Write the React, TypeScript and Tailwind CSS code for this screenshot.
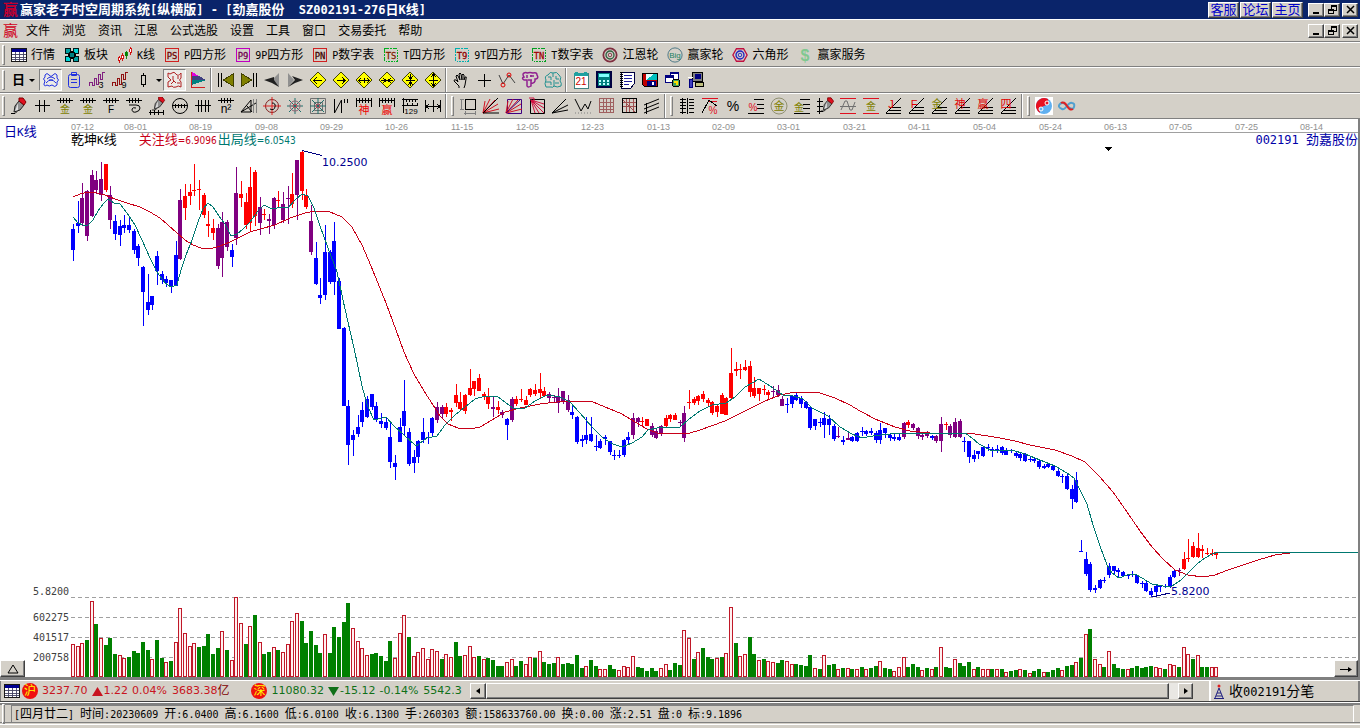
import type { ReactNode } from "react";

const STEP = 14 / 3;
const FIRST_X = 73;
const TOP = 119;
const BASE = 677;

const CANDLES = `
b224,229,250,261 b201,223,226,233 p183,198,223,226 p190,191,236,241 p170,175,216,217 p171,180,190,194
p162,179,195,201 r164,164,190,192 p186,195,220,229 b215,221,234,240 b220,226,235,246 b215,225,228,233
b218,225,230,233 b229,231,250,254 b244,246,258,266 b266,267,292,326 b274,302,310,315 b296,296,305,310
b251,256,271,285 b271,274,280,284 b276,279,283,287 b280,280,287,293 b241,255,286,286 p189,200,259,260
r184,196,208,220 r184,192,196,205 r164,190,191,196 r180,189,190,210 r193,195,215,218 r211,224,226,237
r219,228,233,240 p224,228,266,269 p212,222,258,277 p220,222,247,251 b244,250,257,267 p167,193,238,245
r181,194,198,207 r193,202,225,229 r167,187,223,231 r170,172,216,226 p197,207,223,235 r209,214,215,220
p214,219,221,234 p197,198,225,229 r191,200,201,208 p192,204,220,223 p186,198,199,224 r173,194,204,208
p160,160,195,220 r151,152,191,200 r189,195,207,209 p205,221,252,255 b242,258,284,285 b278,295,298,304
b225,252,295,300 b250,252,282,284 b222,241,282,295 b278,281,329,329 b327,328,406,406 b400,406,445,465
b430,435,440,456 b415,427,434,437 b402,410,422,427 b396,399,417,418 b394,394,407,410 b402,406,420,422
b413,421,424,428 b417,422,428,430 b423,437,462,468 b455,463,467,480 b418,427,442,442 b380,411,426,435
b428,432,464,466 b450,457,463,473 b440,441,457,463 b418,432,440,443 b432,437,438,444 b417,418,433,437
p402,407,420,423 p405,407,414,418 r403,407,414,417 r408,410,412,421 r384,395,403,407 r392,402,409,411
r394,395,411,414 r369,388,395,396 r381,381,389,396 r374,378,391,391 r392,394,396,400 r388,396,404,409
p397,407,409,417 r401,407,410,414 p410,412,415,418 b418,419,425,440 p397,399,420,422 r396,399,404,406
r389,399,400,402 r396,400,405,405 r388,389,395,397 r384,390,394,396 r373,389,393,399 r387,391,396,397
p392,394,398,403 p395,397,398,403 p388,396,403,413 p391,391,402,404 p395,400,410,412 b406,412,415,419
b416,417,442,444 b435,439,441,447 b417,435,440,444 b417,434,441,442 b435,446,447,451 b439,441,448,449
b435,437,439,445 b441,441,452,455 b450,455,456,460 b450,455,456,458 b439,440,455,457 b432,437,440,444
p413,418,435,439 p417,418,422,427 r417,421,422,426 r419,419,426,426 p423,426,435,437 p429,431,438,439
p425,426,434,436 r415,418,426,427 r414,415,419,422 r413,415,420,420 p420,422,423,427 p406,413,438,442
r390,402,403,409 r397,399,403,405 r395,396,401,405 r391,394,399,402 r398,400,403,407 r401,402,413,415
r404,406,412,417 r393,395,414,414 r397,398,415,415 r348,373,398,399 r362,369,371,376 r364,369,370,379
r360,367,370,371 r361,366,392,397 r377,388,396,398 r388,388,394,401 r385,389,390,395 r390,392,395,399
p386,391,392,398 p385,390,395,397 p396,399,406,406 b398,404,405,413 b395,396,404,408 b393,395,400,401
b396,398,404,408 b401,402,408,409 b406,407,428,430 b419,419,426,430 b418,422,423,427 b412,418,425,438
b415,419,425,435 b424,426,439,441 p427,436,437,438 b436,440,442,445 p433,438,440,440 b436,437,441,442
b432,433,441,442 b427,431,432,436 b430,431,434,436 b428,431,433,435 b431,433,440,443 b423,430,440,444
b428,428,433,438 b433,435,438,441 b433,437,439,441 b434,437,440,441 p422,423,437,439 r420,422,425,428
p423,424,428,430 p427,428,436,439 p432,435,437,440 p431,433,436,438 b435,436,438,440 p435,436,441,443
p417,424,441,452 r422,424,425,430 p424,426,435,438 p418,422,437,438 p419,421,437,438 b437,441,442,452
b441,441,457,463 b450,455,459,462 b451,451,454,459 b447,447,456,457 b444,447,448,451 b447,449,450,457
b445,449,450,453 b446,447,453,455 b448,450,455,455 b449,450,451,453 b451,453,456,458 b453,454,458,461
b453,454,461,462 b457,459,460,462 b458,459,461,463 b460,461,467,469 b464,466,468,469 b463,464,467,468
b465,466,470,471 b469,471,476,477 b474,476,477,483 b473,476,489,490 b485,489,499,509 b472,480,502,503
b540,551,552,552 b552,559,574,576 b562,564,590,592 b585,588,590,593 b579,580,588,589 b577,580,581,583
b563,566,575,578 b566,566,571,574 b568,570,572,577 b571,572,576,577 b574,575,576,579 b571,574,575,577
b575,575,583,584 b581,583,584,588 b580,583,591,592 b588,591,595,597 b585,586,592,596 b585,586,587,592
b584,586,587,588 b575,577,587,588 b569,571,577,578 p568,570,571,576 r552,559,569,570 r539,558,559,562
r542,546,557,558 r533,548,557,558 r545,549,551,558 r548,553,554,555 r549,553,554,556 r552,552,555,559
`;

const VOLUMES = `
r33 r31 r34 g37 r76 g53 r39 g32 g39 g23 r22 r19 g20 g26 g24 g35 g27 r18 g37 g19 r15 g16 r35 r69 r44 r31 r34 g30 g31 g43
g23 g29 r46 g27 r17 r80 r54 g33 r51 g62 r35 g23 g25 r30 g27 r25 r33 r56 r64 g56 g34 g46 g32 g24 r43 g24 g50 g40 g55 g74
r49 r36 r29 r22 g23 g24 g21 g16 g36 r19 r44 r62 g40 r21 r25 r29 r18 r28 r26 g18 r23 r20 g35 g21 r22 r31 r20 g21 r18 g19
g17 g11 g11 r15 r18 g11 g16 r13 r20 g19 r26 g15 g13 g14 r20 g13 g14 g13 g22 g9 r11 g17 g11 r8 r8 g12 g8 r7 r11 r10
r21 g10 g9 g6 g9 g6 r9 r13 g7 g14 g12 r47 r39 g18 r25 g29 g20 g18 r19 g20 r24 r70 g34 r21 r23 g40 g23 r17 g18 r16
r15 g14 g17 r16 r13 g13 g12 g11 g22 r9 g8 r22 g12 g13 r8 g9 r9 g8 r8 g10 r8 g9 g11 r16 g9 g8 r6 r10 r20 g10
g13 g10 r7 g9 r8 g10 r30 g10 g9 r18 g14 g11 g15 r8 g10 r8 r8 g8 r8 g8 r5 g6 g7 r8 g7 r4 g6 g8 r5 g5
g7 g9 r7 g11 g12 r15 g19 r43 g48 r18 r13 g10 r26 g13 g9 g8 r8 g9 g11 g9 g10 g11 r10 r9 g8 r13 r12 g10 r30 r23
g18 r22 g10 g10 r10 r10
`;

const RED_LINE =
  "73,197 80,194 88,192 97,193 105,195 115,199 127,203 140,207 150,212 160,218 168,225 177,233 185,240 193,245 201,248 210,249 220,246 230,242 240,237 250,232 260,229 275,225 290,218 305,213 316,211 330,212 342,217 352,227 362,245 371,266 386,303 396,330 404,352 414,374 424,391 433,405 440,416 448,424 458,428 470,429 480,427 492,420 505,412 520,408 540,404 557,402 580,401 593,402 610,409 622,414 635,422 647,429 660,434 690,433 700,430 725,421 745,411 765,401 780,395 790,393 805,392 820,393 835,398 850,405 860,411 875,419 895,427 910,431 930,433 975,434 1000,438 1015,441 1030,445 1055,450 1072,456 1085,462 1099,476 1113,492 1127,512 1140,531 1152,547 1163,559 1175,570 1188,575 1203,577 1215,575 1228,570 1243,565 1258,560 1275,555 1290,553 1298,552";
const TEAL_LINE =
  "73,217 78,223 83,225 88,225 93,220 98,211 104,203 108,199 114,203 120,204 127,213 135,225 142,240 150,258 157,272 165,283 171,287 177,285 181,270 186,255 192,240 198,222 203,209 208,203 213,207 219,216 225,224 231,236 237,234 243,229 250,222 258,211 264,205 272,209 282,207 288,208 295,200 302,194 308,196 314,208 320,226 328,248 337,272 345,309 354,348 362,386 368,407 374,420 386,417 394,426 404,435 416,446 427,438 437,436 445,425 455,415 465,407 475,399 485,396 497,396 505,402 514,409 525,408 535,401 547,395 560,397 570,402 580,413 592,427 603,438 613,444 622,447 632,443 642,437 648,430 657,428 680,427 688,420 700,411 712,405 726,403 735,397 745,387 759,379 770,386 783,395 793,396 803,399 812,408 828,416 840,427 852,434 862,438 873,436 890,434 907,433 940,434 965,433 972,438 979,444 990,450 1000,451 1012,450 1025,454 1040,460 1055,466 1067,473 1074,478 1080,490 1087,504 1093,525 1100,546 1107,565 1112,573 1119,578 1127,575 1135,574 1142,578 1152,584 1163,586 1172,586 1181,580 1188,573 1197,564 1205,558 1212,554 1219,552";

const DATES = [
  "08-01", "08-19", "09-08", "09-29", "10-26", "11-15", "12-05", "12-23", "01-13", "02-09",
  "03-01", "03-21", "04-11", "05-04", "05-24", "06-13", "07-05", "07-25", "08-14",
];

const fills: Record<string, string> = { b: "#0000ff", p: "#800080", r: "#ff0000" };
const candles = CANDLES.trim().split(/\s+/).map((s) => {
  const [high, top, bottom, low] = s.slice(1).split(",").map(Number);
  return { fill: fills[s[0]], high, top, bottom, low };
});
const volumes = VOLUMES.trim().split(/\s+/).map((s) => ({ up: s[0] === "r", h: Number(s.slice(1)) }));
const barX = (i: number) => Math.round(FIRST_X + i * STEP);

const CJK = "font-['Liberation_Sans','Noto_Sans_CJK_SC',sans-serif]";
const MONO = "font-['DejaVu_Sans_Mono','Noto_Sans_CJK_SC',monospace]";
const VERDANA = "font-['DejaVu_Sans','Noto_Sans_CJK_SC',sans-serif]";
const RAISED =
  "border border-t-white border-l-white border-r-[#404040] border-b-[#404040] bg-[#d4d0c8] shadow-[inset_-1px_-1px_0_#808080]";

/** Latin runs are half as wide as a Chinese character, so they get a smaller size. */
function Mixed({ text, latin = "text-[10px]" }: { text: string; latin?: string }) {
  return (
    <>
      {(text.match(/[\x00-\x7f]+|[^\x00-\x7f]+/g) ?? []).map((run, i) => (
        <span key={i} className={/^[\x00-\x7f]/.test(run) ? `${MONO} ${latin} leading-none whitespace-pre` : ""}>
          {run}
        </span>
      ))}
    </>
  );
}

function Glyph({ children, smooth, size = 18 }: { children: ReactNode; smooth?: boolean; size?: number }) {
  return (
    <svg
      width={size}
      height={size}
      viewBox="0 0 18 18"
      fill="none"
      stroke="#000"
      shapeRendering={smooth ? "auto" : "crispEdges"}
      aria-hidden="true"
      className="shrink-0"
    >
      {children}
    </svg>
  );
}

function T({ x, y, size = 10, fill, children, bold }: { x: number; y: number; size?: number; fill: string; children: string; bold?: boolean }) {
  return (
    <text x={x} y={y} fontSize={size} fill={fill} stroke="none" textAnchor="middle" fontWeight={bold ? 700 : 400} className={CJK}>
      {children}
    </text>
  );
}

/* ---- shared icon pieces ---- */
const scale = <path d="M1 3.5h16M4.5 1v5M7.5 1v5M10.5 1v5M13.5 1v5" />;
const pen = (
  <>
    <path d="M9 4L5 9l-1 6 6-2 4-5z" fill="#909090" stroke="#202020" />
    <path d="M8 6l-3 8 3-1z" fill="#e0e0e0" stroke="none" />
    <path d="M9 1h4l3 4-2 3-5-4z" fill="#e01020" stroke="#800000" />
    <path d="M1 16.5h4l2-2" />
  </>
);
const fanLines = <path d="M1 16L16 1M1 16.5h15M4 13.5h12M7 10.5h9" />;
const steps = <path d="M7 2.5h10M10 7.5h7M10 11.5h7M1 16.5h16" />;

const box = (label: string, edge: string, ink: string, dotted = false) => (
  <Glyph size={16}>
    <rect x="2" y="2" width="14" height="14" stroke={edge} strokeWidth="1.5" strokeDasharray={dotted ? "2 1" : undefined} />
    <text x="9" y="13" fontSize="10" fill={ink} stroke={ink} strokeWidth="0.3" textAnchor="middle" className={MONO}>
      {label}
    </text>
  </Glyph>
);

const diamond = (arrows: string) => (
  <Glyph>
    <path d="M9 1l8 8-8 8-8-8z" fill="#ffff00" stroke="#404000" />
    <path d={arrows} strokeWidth="1" />
  </Glyph>
);

const squiggle = (color: string, n: string) => (
  <Glyph>
    <path d="M1.5 15v-4h3v3h2V7h2v6h2V3h2v5h2V1h2" stroke={color} />
    <T x={13} y={17} size={9} fill="#000">{n}</T>
  </Glyph>
);

const quoteItems: [string, ReactNode][] = [
  ["行情", (
    <Glyph size={16} key="a">
      <rect x="1" y="2" width="16" height="14" fill="#fff" stroke="#000" />
      <path d="M1 4h16" stroke="#000090" strokeWidth="3" />
      <path d="M1 8.5h16M1 11.5h16M1 14.5h16M5.5 6v10M9.5 6v10M13.5 6v10" stroke="#404060" />
    </Glyph>
  )],
  ["板块", (
    <Glyph size={16} key="b">
      <path d="M5 5h8v8H5z" fill="#000" />
      <rect x="1.5" y="1.5" width="6" height="6" fill="#00a0a0" />
      <rect x="10.5" y="1.5" width="6" height="6" fill="#00d8d8" />
      <rect x="1.5" y="10.5" width="6" height="6" fill="#00d8d8" />
      <rect x="10.5" y="10.5" width="6" height="6" fill="#00a0a0" />
      <rect x="6.5" y="6.5" width="5" height="5" fill="#008080" />
    </Glyph>
  )],
  ["K线", (
    <Glyph size={16} key="c">
      <path d="M2.5 10v8M6.5 7v9M15.5 0v9" stroke="#d00000" />
      <path d="M10.5 4v9" stroke="#008000" />
      <path d="M1.5 12h2v3h-2zM5.5 9h2v4h-2zM14.5 2h2v4h-2z" fill="#fff" stroke="#d00000" />
      <path d="M9.5 6h2v4h-2z" fill="#008000" stroke="#008000" />
    </Glyph>
  )],
  ["P四方形", box("PS", "#d02020", "#700000")],
  ["9P四方形", box("P9", "#c000c0", "#700050")],
  ["P数字表", box("PN", "#d02020", "#400000")],
  ["T四方形", box("TS", "#00b020", "#802000", true)],
  ["9T四方形", box("T9", "#00b0b0", "#900000", true)],
  ["T数字表", box("TN", "#00a020", "#a00000", true)],
  ["江恩轮", (
    <Glyph size={16} smooth key="d">
      <circle cx="9" cy="9" r="7.5" stroke="#803040" strokeWidth="2" />
      <circle cx="9" cy="9" r="4.5" stroke="#306040" strokeWidth="1.5" />
      <circle cx="9" cy="9" r="2" stroke="#803040" />
    </Glyph>
  )],
  ["赢家轮", (
    <Glyph size={16} smooth key="e">
      <circle cx="9" cy="9" r="8" stroke="#407080" />
      <T x={9} y={12} size={9} fill="#208060">Big</T>
    </Glyph>
  )],
  ["六角形", (
    <Glyph size={16} smooth key="f">
      <path d="M5 2h8l4 7-4 7H5L1 9z" stroke="#c01040" strokeWidth="1.5" />
      <circle cx="9" cy="9" r="4.5" stroke="#2020c0" strokeWidth="1.5" />
      <circle cx="9" cy="9" r="2" stroke="#2020c0" />
    </Glyph>
  )],
  ["赢家服务", (
    <Glyph size={16} smooth key="g"><T x={9} y={16} size={18} fill="#80c890" bold>$</T></Glyph>
  )],
];

const cursorTools: [string, ReactNode][] = [
  ["手形", (
    <Glyph smooth key="a">
      <path d="M7 17v-2L2 10q0-2 2-1l2 2-2-6q1-2 2 0l2 4-1-6q1-2 2 0l1 6V4q1-2 2 0v5l1-3q2-1 1 2l-1 6-1 3" strokeWidth="1" />
    </Glyph>
  )],
  ["十字", <Glyph key="b"><path d="M9.5 3v13M3 9.5h13" /></Glyph>],
  ["折线", (
    <Glyph smooth key="c">
      <path d="M1 4l4 9 6-9 6 8" stroke="#404040" />
      <circle cx="5" cy="14" r="2" stroke="#e00000" />
      <circle cx="11" cy="4" r="2" stroke="#e00000" />
    </Glyph>
  )],
  ["云形", (
    <Glyph smooth key="d">
      <path d="M3 2q2-1 3 0 3-1 6 0 4-1 4 2 2 3-1 4h-1v2q-1 3-4 2v3q-3 2-4 0V9H3Q0 7 3 6 1 3 3 2zM6 4v3M10 4v2M13 5h-4M7 9h4M10 12V9" stroke="#902090" strokeWidth="1.5" />
    </Glyph>
  )],
  ["脑图", (
    <Glyph smooth key="e">
      <path d="M9 2Q6 0 4 4 0 5 2 9q-2 4 0 7h5q2 1 3-1 3 2 7 0 1-3-1-5 2-4-1-6Q13 0 9 2zM9 2v4M4 6h3v3M2 11h5v3M12 5v3h3M11 12h4M10 9v6" stroke="#209090" />
    </Glyph>
  )],
];

const utilityTools: [string, ReactNode][] = [
  ["日历", (
    <Glyph key="a">
      <rect x="2" y="2" width="14" height="15" fill="#fff" stroke="#408080" />
      <path d="M2 3.5h14M4.5 1v3M13.5 1v3" stroke="#20a0a0" strokeWidth="3" />
      <T x={9} y={14} size={10} fill="#d00000">21</T>
    </Glyph>
  )],
  ["计算器", (
    <Glyph key="b">
      <rect x="2" y="1" width="14" height="15" fill="#008080" stroke="#000040" strokeWidth="2" />
      <path d="M4 4.5h10" stroke="#80ffff" strokeWidth="3" />
      <path d="M4 9.5h10M4 12.5h10" stroke="#c0ffff" strokeWidth="2" strokeDasharray="2 2" />
    </Glyph>
  )],
  ["记事", (
    <Glyph key="c">
      <path d="M3 1h13v12l-3 4H3z" fill="#fff" stroke="#000040" />
      <path d="M6 4.5h8M6 7.5h8M6 10.5h8M6 13.5h5" stroke="#2020a0" />
      <path d="M3.5 1v16" strokeDasharray="1 1" strokeWidth="3" />
    </Glyph>
  )],
  ["保存", (
    <Glyph key="d">
      <path d="M1.5 2.5h15v13h-13l-2-2z" fill="#c00000" />
      <path d="M5 3h11v6H5z" fill="#00c0c0" stroke="none" />
      <path d="M5 9l8-6H5z" fill="#e0ffff" stroke="none" />
      <path d="M6 10h9v5H6z" fill="#000080" stroke="none" />
      <path d="M11 11h2v3h-2z" fill="#fff" stroke="none" />
    </Glyph>
  )],
  ["网络", (
    <Glyph key="e">
      <rect x="6.5" y="1.5" width="8" height="8" fill="#fff" stroke="#000080" />
      <rect x="1.5" y="4.5" width="8" height="7" fill="#fff" stroke="#000080" />
      <path d="M2 6h7M7 2h7" stroke="#000080" strokeWidth="2" />
      <circle cx="12" cy="12" r="4" fill="#40a060" />
      <path d="M10 11h3v3" stroke="#ffe000" strokeWidth="2" />
    </Glyph>
  )],
  ["电脑", (
    <Glyph key="f">
      <rect x="5.5" y="1.5" width="10" height="9" fill="#808080" />
      <rect x="8" y="3" width="6" height="5" fill="#000080" stroke="none" />
      <path d="M8.5 11.5h8v4h-8z" fill="#c0c080" />
      <path d="M2.5 8.5h3v8h-3z" fill="#4040c0" stroke="#000080" />
      <path d="M1 6.5h5" stroke="#fff" />
    </Glyph>
  )],
];

const web = <path d="M9 1v16M1 9h16M3 3l12 12M15 3L3 15" stroke="#20706c" />;
const redFan = <path d="M1 16L3 4M1 16L8 2M1 16L13 3M1 16L16 7M1 16l16-4" stroke="#d01020" />;

const drawTools: [string, ReactNode][] = [
  ["画笔", <Glyph smooth key="0">{pen}</Glyph>],
  ["分割", <Glyph key="1"><path d="M2 8.5h15M6.5 3v12M11.5 3v12" /></Glyph>],
  ["金分割一", <Glyph key="2">{scale}<T x={9} y={16} fill="#808000">金</T></Glyph>],
  ["金分割二", <Glyph key="3">{scale}<T x={9} y={16} fill="#808000">金</T></Glyph>],
  ["F分割", <Glyph key="4">{scale}<T x={9} y={16} fill="#000">F</T></Glyph>],
  ["螺旋", <Glyph smooth key="5">{scale}<path d="M4 8h7q4 0 4 3t-4 4-4-3q1-2 4-1" /></Glyph>],
  ["标尺笔", <Glyph smooth key="6"><g transform="translate(3 -1) scale(.85)">{pen}</g><path d="M1 15.5h15M2.5 13v5M6.5 13v5M10.5 13v5M15.5 13v5" /></Glyph>],
  ["圆尺", <Glyph smooth key="7"><circle cx="9" cy="9" r="7.5" /><path d="M1 8.5h16M4.5 7v4M7.5 7v4M10.5 7v4M13.5 7v4" /></Glyph>],
  ["四分", <Glyph key="8"><path d="M1 8.5h16M4.5 3v12M7.5 3v12M11.5 3v12M14.5 3v12" /></Glyph>],
  ["平方", <Glyph key="9">{scale}<T x={9} y={16} size={12} fill="#000">n²</T></Glyph>],
  ["三角", <Glyph smooth key="10"><path d="M1 15L11 3v12zM1 15l15-9M7 9l5 6" /><path d="M13.5 2v14M16.5 2v14" stroke="#808080" /></Glyph>],
  ["圆周", <Glyph smooth key="11"><circle cx="9" cy="9" r="6.5" stroke="#802020" /><path d="M9 0v18M0 9h18" stroke="#e02020" /><path d="M9 6q4 0 3 4t-5 2" /></Glyph>],
  ["圆网", <Glyph smooth key="12">{web}<circle cx="9" cy="9" r="5" stroke="#906070" /><circle cx="9" cy="9" r="2" stroke="#c04050" /></Glyph>],
  ["方网", <Glyph smooth key="13"><path d="M1.5 1.5h15v15h-15zM5.5 5.5h8v8h-8z" stroke="#707070" />{web}<circle cx="9" cy="9" r="2" stroke="#c04050" /></Glyph>],
  ["波动", <Glyph smooth key="14"><path d="M2.5 2v14L9.5 3v13M12.5 2v4M15.5 2v4" /></Glyph>],
  ["神分割", <Glyph key="15">{scale}<path d="M1.5 1v9M16.5 1v9" /><T x={9} y={17} size={11} fill="#ee0000">神</T></Glyph>],
  ["赢分割", <Glyph key="16">{scale}<path d="M1.5 1v9M16.5 1v9" /><T x={9} y={17} size={11} fill="#ee0000">赢</T></Glyph>],
  ["数尺", <Glyph key="17"><path d="M2.5 1v15M1 2.5h16M1 8.5h16M5.5 2v3M8.5 2v3M11.5 2v3M14.5 2v3M6.5 6v3M11.5 6v3M16.5 6v3" /><T x={10} y={17} size={8} fill="#000">129</T></Glyph>],
  ["间距", <Glyph key="18"><path d="M1.5 3v12M16.5 3v12M9.5 3v12M2 9.5h14M5 7l-3 2.5L5 12M13 7l3 2.5-3 2.5" /></Glyph>],
];

const shapeTools: [string, ReactNode][] = [
  ["矩形", <Glyph key="0"><path d="M6.5 2.5h10v10h-10z" /><path d="M2.5 2v11M1 2.5h4M1 12.5h4M5 16.5h12M6.5 14v4M16.5 14v4" stroke="#808080" /></Glyph>],
  ["扇形一", <Glyph smooth key="1">{redFan}<path d="M1 16L16 1M1 16h16" /></Glyph>],
  ["扇形二", <Glyph smooth key="2"><path d="M2.5 2.5h14v14h-14z" stroke="#400080" />{redFan}<path d="M1 16L16 2" stroke="#400080" /></Glyph>],
  ["扇形三", <Glyph smooth key="3"><path d="M2.5 2.5h14v14h-14z" /><path d="M3 3l13 4M3 3l13 8M3 3l13 13M3 3l8 13M3 3l4 13M1 1h5v5" stroke="#d01040" /></Glyph>],
  ["射线", <Glyph smooth key="4"><path d="M1 16L15 2M1 16l16-8M1 16l16-3" /></Glyph>],
  ["折角", <Glyph smooth key="5"><path d="M1 2l6 12 4-7 3 5 3-8" /><path d="M1 16h16" stroke="#808080" strokeDasharray="1 2" /></Glyph>],
  ["网格一", <Glyph key="6"><path d="M2.5 1.5h14v14h-14zM2 5.5h15M2 9.5h15M2 12.5h15M6.5 1v15M9.5 1v15M13.5 1v15" stroke="#a06060" /></Glyph>],
  ["网格二", <Glyph key="7"><path d="M2 5.5h15M2 9.5h15M6.5 1v15M9.5 1v15M13.5 1v15M2 2l14 14" stroke="#a05050" /><path d="M2.5 1.5h14v14h-14z" /></Glyph>],
  ["平行", <Glyph smooth key="8"><path d="M1 8l15-6M1 12l15-6M1 16l15-6M3.5 6v11" /></Glyph>],
];

const percentTools: [string, ReactNode][] = [
  ["列表", <Glyph key="0"><path d="M4.5 1v16M9.5 1v16M2 2.5h6M2 5.5h6M2 8.5h6M2 11.5h6M2 15.5h6M11 2.5h5M11 5.5h5M11 8.5h5M11 11.5h5M11 15.5h5" /></Glyph>],
  ["百分线", <Glyph key="1"><path d="M1 1.5h16M8 4.5h8" stroke="#e01020" /><path d="M1 16L8 3l8 6" /><T x={12} y={17} fill="#e01020">%</T></Glyph>],
  ["百分比", <Glyph key="2"><T x={9} y={14} size={14} fill="#000">%</T></Glyph>],
  ["百分阶", <Glyph key="3">{steps}<T x={6} y={14} fill="#e01020">%</T></Glyph>],
  ["金圆", <Glyph smooth key="4"><circle cx="9" cy="9" r="8" stroke="#909070" /><T x={9} y={13} size={11} fill="#808000">金</T></Glyph>],
  ["金阶", <Glyph key="5">{steps}<T x={6} y={14} size={10} fill="#808000">金</T></Glyph>],
  ["笔尺", <Glyph smooth key="6"><g transform="translate(4 0) scale(.85)">{pen}</g><path d="M3.5 1v16M1 4.5h6M1 9.5h6M1 14.5h6" /></Glyph>],
  ["波带", <Glyph smooth key="7"><path d="M1 1.5h16M1 16.5h16" stroke="#e01020" /><path d="M1 9.5h16M2 13l4-9h2l3 9h2l3-8" stroke="#707070" /></Glyph>],
  ["金带", <Glyph key="8"><path d="M1 1.5h16M1 16.5h16" stroke="#e01020" /><T x={9} y={13} fill="#808000">金</T></Glyph>],
  ...[["J", "#e00000"], ["F", "#e00000"], ["金", "#808000"], ["神", "#e00000"], ["赢", "#e00000"], ["四", "#e00000"]].map(
    ([c, color]): [string, ReactNode] => [`${c}角线`, <Glyph key={c}>{fanLines}<T x={6} y={11} size={11} fill={color}>{c}</T></Glyph>]
  ),
];

const extraTools: [string, ReactNode][] = [
  ["太极", (
    <Glyph smooth key="a">
      <rect width="18" height="18" fill="#fff" stroke="none" />
      <circle cx="9" cy="9" r="8" fill="#60b0f0" stroke="none" />
      <path d="M13 2A8 8 0 1 0 5 16Q4 10 9 9t4-7z" fill="#e81020" stroke="none" />
      <circle cx="12" cy="6" r="2" fill="#e81020" stroke="#fff" />
      <circle cx="6" cy="12" r="2" fill="#60b0f0" stroke="#fff" />
    </Glyph>
  )],
  ["无穷", (
    <Glyph smooth key="b">
      <path d="M9 9Q5 4 2 7t2 5q2 1 5-3t5-3q3 0 2 4t-7-1" stroke="#50a0d0" strokeWidth="2" />
      <path d="M3 6q3-2 6 3t6 3" stroke="#e02020" strokeWidth="2" />
    </Glyph>
  )],
];

function Grip() {
  return <div className="mx-[2px] h-[20px] w-[3px] shrink-0 border border-t-white border-r-[#808080] border-b-[#808080] border-l-white" />;
}

function Divider() {
  return <div className="mr-[2px] ml-px h-[24px] w-[2px] shrink-0 border-r border-l border-r-white border-l-[#808080]" />;
}

function ToolButton({ name, pressed, children }: { name: string; pressed?: boolean; children: ReactNode }) {
  return (
    <button
      type="button"
      aria-label={name}
      title={name}
      className={`flex h-[22px] w-[23px] shrink-0 items-center justify-center ${
        pressed ? "border border-t-[#808080] border-r-white border-b-white border-l-[#808080] bg-[#ecebe7]" : ""
      }`}
    >
      {children}
    </button>
  );
}

function Tools({ items }: { items: [string, ReactNode][] }) {
  return items.map(([name, icon]) => (
    <ToolButton key={name} name={name}>{icon}</ToolButton>
  ));
}

function Drop({ name }: { name: string }) {
  return (
    <button type="button" aria-label={name} className="flex h-[22px] w-[9px] shrink-0 items-center justify-center">
      <svg width="6" height="3" aria-hidden="true"><path d="M0 0h6L3 3z" /></svg>
    </button>
  );
}

function WindowButtons() {
  const icons = [
    <path key="min" d="M3 8h6v2H3z" fill="#000" stroke="none" />,
    <path key="restore" d="M5.5 5V1.500h5v5H8M5 2.500h6M2.500 5.500h5v4h-5zM2 6.500h6" />,
    <path key="close" d="M3 2l7 7M10 2L3 9" strokeWidth="1.500" shapeRendering="auto" />,
  ];
  return (
    <div className="flex shrink-0 items-center">
      {["最小化", "还原", "关闭"].map((name, i) => (
        <button key={name} type="button" aria-label={name} className={`flex h-[14px] w-[16px] items-center justify-center ${RAISED} ${i === 2 ? "ml-[2px]" : ""}`}>
          <svg width="13" height="11" fill="none" stroke="#000" shapeRendering="crispEdges" aria-hidden="true">{icons[i]}</svg>
        </button>
      ))}
    </div>
  );
}

function Chart() {
  return (
    <main className="relative border-r-2 border-[#808080] bg-white">
      <svg width="100%" height="558" className="block" role="img" aria-label="劲嘉股份 日K线">
        <g transform={`translate(0 ${-TOP})`} shapeRendering="crispEdges">
          <line x1="71" x2="100%" y1="132.5" y2="132.5" stroke="#a0a0a0" />
          <g className={CJK} fontSize="9" fill="#909090">
            <text x="71" y="130">07-12</text>
            {DATES.map((d, i) => (
              <text key={d} x={Math.round(124 + (i * 196) / 3)} y="130">{d}</text>
            ))}
          </g>

          {[597.5, 617.5, 637.5, 657.5].map((y) => (
            <line key={y} x1="71" x2="100%" y1={y} y2={y} stroke="#a0a0a0" strokeDasharray="4 3" />
          ))}
          <g className={MONO} fontSize="10" fill="#404040" textAnchor="end">
            <text x="69" y="595">5.8200</text>
            <text x="69" y="621">602275</text>
            <text x="69" y="641">401517</text>
            <text x="69" y="661">200758</text>
          </g>

          {volumes.map(({ up, h }, i) =>
            up ? (
              <rect key={i} x={barX(i) - 1.5} y={BASE - h + 0.5} width="3" height={h - 1} fill="#fff0f0" stroke="#c01828" />
            ) : (
              <rect key={i} x={barX(i) - 2} y={BASE - h} width="4" height={h} fill="#008000" />
            )
          )}

          {candles.map((c, i) => (
            <g key={i} fill={c.fill}>
              <rect x={barX(i)} y={c.high} width="1" height={c.low - c.high} />
              <rect x={barX(i) - 2} y={c.top} width="4" height={Math.max(1, c.bottom - c.top)} />
            </g>
          ))}

          <polyline points={RED_LINE} fill="none" stroke="#c80018" />
          <polyline points={TEAL_LINE} fill="none" stroke="#007870" />
          <line x1="1219" x2="100%" y1="552.5" y2="552.5" stroke="#007870" />

          <path d="M302 150.500l20 5M1152 597l18-4" stroke="#000080" fill="none" />
          <path d="M1104 147h9l-4.500 4z" />
          <g className={VERDANA} fontSize="11" fill="#000090">
            <text x="322" y="166">10.2500</text>
            <text x="1171" y="595">5.8200</text>
          </g>
        </g>
      </svg>

      {/* captions over the plot */}
      <div className="absolute top-1 left-1 text-[13px] leading-[18px] text-[#0000a8]">
        <Mixed text="日K线" latin="text-[11px]" />
      </div>
      <div className="absolute top-3 left-[71px] flex text-[13px] leading-[18px]">
        <span className="mr-[22px]"><Mixed text="乾坤K线" latin="text-[11px]" /></span>
        <span className="mr-px text-[#c80018]">关注线<span className="font-['DejaVu_Sans_Condensed','DejaVu_Sans',sans-serif] text-[10px]">=6.9096</span></span>
        <span className="text-[#007870]">出局线<span className="font-['DejaVu_Sans_Condensed','DejaVu_Sans',sans-serif] text-[10px]">=6.0543</span></span>
      </div>
      <div className="absolute top-3 right-0 text-[13px] leading-[18px] text-[#0000a8]">
        <Mixed text="002191 劲嘉股份" latin="text-[12px]" />
      </div>
      <button type="button" aria-label="展开" className={`absolute bottom-0 left-0 flex h-[17px] w-[25px] items-center justify-center ${RAISED}`}>
        <svg width="12" height="10" fill="none" stroke="#000" aria-hidden="true"><path d="M6 1l5 8H1z" /></svg>
      </button>
      <button type="button" aria-label="向右" className={`absolute right-0 bottom-0 flex h-[17px] w-[24px] items-center justify-center ${RAISED}`}>
        <svg width="12" height="8" stroke="#000" aria-hidden="true"><path d="M0 4.500h9" /><path d="M8 2v5l4-2.500z" stroke="none" /></svg>
      </button>
    </main>
  );
}

function Badge({ children }: { children: string }) {
  return (
    <span className="flex size-4 shrink-0 items-center justify-center rounded-full bg-[#f01010] text-[12px] leading-none text-[#ffff00]">
      {children}
    </span>
  );
}

function Quote({ index, change, percent, amount, up }: { index: string; change: string; percent: string; amount: string; up?: boolean }) {
  return (
    <span className={`ml-1 flex items-center gap-1 ${up ? "text-[#c81420]" : "text-[#107018]"}`}>
      <span>{index}</span>
      <span className="flex items-center gap-px">
        <svg width="11" height="9" fill="currentColor" aria-hidden="true">
          <path d={up ? "M5.500 0L11 9H0z" : "M0 0h11L5.500 9z"} />
        </svg>
        {change}
      </span>
      <span className="mr-px">{percent}</span>
      <span>{amount}</span>
    </span>
  );
}

function IndexBar() {
  return (
    <section className="flex h-[22px] items-stretch border-t border-t-white border-b border-b-[#404040]">
      <div className={`flex w-[470px] shrink-0 items-center overflow-hidden whitespace-pre border-l border-l-[#808080] pl-[3px] text-[11px] ${VERDANA}`}>
        {quoteItems[0][1]}
        <span className="ml-[2px]"><Badge>沪</Badge></span>
        <Quote index="3237.70" change="1.22" percent="0.04%" amount="3683.38" up />
        <span className="text-[12px] text-[#800000]">亿</span>
        <span className="ml-[22px]"><Badge>深</Badge></span>
        <Quote index="11080.32" change="-15.12" percent="-0.14%" amount="5542.3" />
      </div>
      <div className="my-[2px] flex flex-1 bg-[#e9e7e3]">
        <button type="button" aria-label="向左滚动" className={`flex w-4 items-center justify-center ${RAISED}`}>
          <svg width="4" height="6" aria-hidden="true"><path d="M4 0v6L0 3z" /></svg>
        </button>
        <div className={`flex-1 ${RAISED}`} />
        <div className="w-[9px]" />
        <button type="button" aria-label="向右滚动" className={`flex w-[15px] items-center justify-center ${RAISED}`}>
          <svg width="4" height="6" aria-hidden="true"><path d="M0 0v6l4-3z" /></svg>
        </button>
      </div>
      <div className="w-[16px]" />
      <div className="flex w-[151px] shrink-0 items-center gap-1 border-l-2 border-l-white border-r-2 border-r-[#808080] pl-[2px] text-[14px]">
        <svg width="12" height="15" viewBox="0 0 12 15" fill="none" stroke="#202080" aria-hidden="true">
          <path d="M6 4L2 14M6 4l4 10M4 9h4M3 12h6M1 14.500h10" />
          <circle cx="6" cy="2" r="1.500" fill="#e02020" stroke="none" />
        </svg>
        <span className="leading-[18px]"><Mixed text="收002191分笔" latin="text-[12px]" /></span>
      </div>
    </section>
  );
}

const MENU = ["文件", "浏览", "资讯", "江恩", "公式选股", "设置", "工具", "窗口", "交易委托", "帮助"];

export default function App() {
  return (
    <div className={`min-h-screen overflow-hidden bg-[#d4d0c8] text-[12px] text-black ${CJK}`}>
      <header className="flex h-[19px] items-center bg-[#0a246a] pr-[2px] pl-[3px]">
        <span className="w-[16px] text-[15px] leading-none font-bold text-[#c00030]">赢</span>
        <h1 className="flex-1 truncate pl-[1px] text-[13px] leading-[18px] font-bold text-white">
          <Mixed text="赢家老子时空周期系统[纵横版] - [劲嘉股份  SZ002191-276日K线]" latin="text-[12px]" />
        </h1>
        <div className="mr-[5px] flex gap-[1px]">
          {["客服", "论坛", "主页"].map((t) => (
            <button key={t} type="button" className={`h-[16px] w-[31px] text-[13px] leading-[14px] text-[#0000c8] ${RAISED}`}>{t}</button>
          ))}
        </div>
        <WindowButtons />
      </header>

      <nav className="flex h-[23px] items-center border-t border-b border-t-white border-b-[#808080] pr-[2px] pl-[3px]">
        <span className="w-[23px] text-[15px] leading-none text-[#d00020]">赢</span>
        <div className="flex flex-1 gap-3">
          {MENU.map((m) => (
            <button key={m} type="button" className="leading-[18px] whitespace-nowrap">{m}</button>
          ))}
        </div>
        <WindowButtons />
      </nav>

      <div role="toolbar" aria-label="行情" className="flex h-[25px] items-center border-t border-b border-t-white border-b-[#808080]">
        <Grip />
        <div className="ml-1 flex gap-[9px]">
          {quoteItems.map(([label, icon]) => (
            <button key={label} type="button" className="flex items-center gap-1 leading-[18px] whitespace-nowrap">
              {icon}
              <span><Mixed text={label} /></span>
            </button>
          ))}
        </div>
      </div>

      <div role="toolbar" aria-label="周期" className="flex h-[26px] items-center border-t border-b border-t-white border-b-[#808080]">
        <Grip />
        <button type="button" className="ml-[3px] w-[17px] text-[13px] font-bold">日</button>
        <Drop name="周期" />
        <div className="w-[3px]" />
        <ToolButton name="叠加" pressed>
          <Glyph smooth><path d="M3 4q2-3 4 0t4 0 4 0v3q3 2 0 4v3q-2 3-5 0-3 2-5 0-3 2-3-1l1-3Q0 8 3 6zM5 8q4-4 8 0M4 12q5-6 10 0M7 9h4" stroke="#2030e0" /></Glyph>
        </ToolButton>
        <ToolButton name="剪贴">
          <Glyph smooth><rect x="3.5" y="3.5" width="11" height="13" rx="2" stroke="#2030e0" /><path d="M6.500 1.500h5v3h-5zM6 8.500h6M6 11.500h6" stroke="#2030e0" /></Glyph>
        </ToolButton>
        <ToolButton name="三段">{squiggle("#802080", "3")}</ToolButton>
        <ToolButton name="九段">{squiggle("#901010", "9")}</ToolButton>
        <ToolButton name="K线样式">
          <Glyph><path d="M9.500 2v14" /><rect x="7.5" y="4.5" width="4" height="9" fill="#d4d0c8" /></Glyph>
        </ToolButton>
        <Drop name="K线样式" />
        <ToolButton name="形态" pressed>
          <Glyph smooth><path d="M2 2q2 2 4 0t4 1 5-1v5q-3 2 0 4v5q-3-2-5 0-3 1-4-1l-4 1v-5l3-2-3-3zM7 5v4l3 3M12 5v3M11 12h3M5 13l3-3" stroke="#b02020" /></Glyph>
        </ToolButton>
        <ToolButton name="筹码">
          <Glyph><path d="M3 1l9 5H3z" fill="#e000e0" stroke="none" /><path d="M3 5h7l7 4H3z" fill="#404080" stroke="none" /><path d="M3 9h14L3 14z" fill="#008080" stroke="none" /><path d="M2.500 1v16M2 16.500h14" stroke="#d02020" /></Glyph>
        </ToolButton>
        <Divider />
        <ToolButton name="首页"><Glyph><path d="M1.500 2v14M4.500 2v14" /><path d="M16.500 2.500v13L6.500 9z" fill="#808000" stroke="#404000" /></Glyph></ToolButton>
        <ToolButton name="末页"><Glyph><path d="M16.500 2v14M13.500 2v14" /><path d="M1.500 2.500v13L11.500 9z" fill="#808000" stroke="#404000" /></Glyph></ToolButton>
        <ToolButton name="后退"><Glyph smooth><path d="M16 2v14l-5-5V7z" fill="#909090" stroke="none" /><path d="M1 9l10-3v3l5 7-7-4z" fill="#202020" stroke="none" /></Glyph></ToolButton>
        <ToolButton name="前进"><Glyph smooth><path d="M2 2v14l6-7z" fill="#909090" stroke="none" /><path d="M17 9L6 5l3 4-7 7 7-4z" fill="#202020" stroke="none" /></Glyph></ToolButton>
        <ToolButton name="左移">{diamond("M5 9.500h8M8 6L5 9.500 8 13")}</ToolButton>
        <ToolButton name="右移">{diamond("M5 9.500h8M10 6l3 3.500-3 3.500")}</ToolButton>
        <ToolButton name="横向拉伸">{diamond("M4 9.500h10M6 7L4 9.500 6 12M12 7l2 2.500-2 2.500M9.500 7v5")}</ToolButton>
        <ToolButton name="横向压缩">{diamond("M3 9.500h12M5 7l3 2.500L5 12M13 7l-3 2.500 3 2.500")}</ToolButton>
        <ToolButton name="纵向压缩">{diamond("M9.500 3v12M5 9.500h9M7 5l2.500 3L12 5M7 14l2.500-3 2.500 3")}</ToolButton>
        <ToolButton name="纵向拉伸">{diamond("M9.500 3v12M5 9.500h9M7 6l2.500-3L12 6M7 12l2.500 3 2.500-3")}</ToolButton>
        <Divider />
        <Tools items={cursorTools} />
        <Divider />
        <Tools items={utilityTools} />
      </div>

      <div role="toolbar" aria-label="画线" className="flex h-[26px] items-center border-t border-b border-t-white border-b-[#808080]">
        <Grip />
        <Tools items={drawTools} />
        <Divider />
        <Grip />
        <Tools items={shapeTools} />
        <Divider />
        <Grip />
        <Tools items={percentTools} />
        <Divider />
        <Grip />
        <Tools items={extraTools} />
      </div>

      <Chart />
      <div className="h-[3px] bg-[#808080]" />
      <IndexBar />
      <div className="h-[3px] border-t border-b-2 border-t-white border-b-[#808080]" />
      <footer className="flex h-[18px] items-center border-b border-b-[#808080] pr-[6px]">
        <Grip />
        <div className="ml-1 flex-1 border-t border-l border-t-[#808080] border-l-[#808080] border-r border-r-white pl-[2px] leading-[16px] whitespace-nowrap">
          <Mixed text="[四月廿二] 时间:20230609 开:6.0400 高:6.1600 低:6.0100 收:6.1300 手:260303 额:158633760.00 换:0.00 涨:2.51 盘:0 标:9.1896" />
        </div>
      </footer>
      <div className="h-[2px] border-b border-b-white" />
    </div>
  );
}
